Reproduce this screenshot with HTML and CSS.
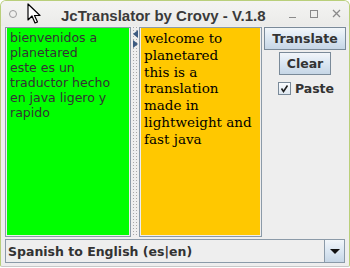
FILE: index.html
```html
<!DOCTYPE html>
<html>
<head>
<meta charset="utf-8">
<link rel="stylesheet" href="styles.css">
</head>
<body>
<div class="window">
  <div class="titlebar">
    <span class="dot"></span>
    <span class="title">JcTranslator by Crovy - V.1.8</span>
    <div class="controls">
      <span class="min"></span>
      <span class="max"></span>
      <svg class="close" width="9" height="9" viewBox="0 0 9 9"><path d="M1 1L8 8M8 1L1 8" stroke="#8a8a8a" stroke-width="1.3"/></svg>
    </div>
    <svg class="cursor" width="14" height="21" viewBox="0 0 14 21"><path d="M1 1L1 17L5 13L8 20L10.5 19L7.5 12.5L13 12.5Z" fill="#fff" stroke="#000" stroke-width="1.2" stroke-linejoin="round"/></svg>
  </div>
  <div class="content">
    <div class="main">
      <div class="split">
        <div class="pane left">
          <div class="text sans">bienvenidos a<br>planetared<br>este es un<br>traductor hecho<br>en java ligero y<br>rapido</div>
        </div>
        <div class="divider">
          <span class="arr l"></span>
          <span class="arr r"></span>
        </div>
        <div class="pane right">
          <div class="text serif">welcome to<br>planetared<br>this is a<br>translation<br>made in<br>lightweight and<br>fast java</div>
        </div>
      </div>
      <div class="side">
        <button class="btn translate">Translate</button>
        <button class="btn clear">Clear</button>
        <label class="check"><span class="box"><svg width="9" height="9" viewBox="0 0 9 9"><path d="M1.5 4.5L3.5 7.5L7.5 1.5" fill="none" stroke="#222" stroke-width="1.6"/></svg></span>Paste</label>
      </div>
    </div>
    <div class="combo">
      <span class="combo-text">Spanish to English (es|en)</span>
      <span class="combo-btn"><span class="tri"></span></span>
    </div>
  </div>
</div>
</body>
</html>
```

FILE: styles.css
```css
html, body {
  margin: 0;
  padding: 0;
  width: 350px;
  height: 268px;
  overflow: hidden;
  background: #ffffff;
}
.window {
  box-sizing: border-box;
  width: 350px;
  height: 267px;
  background: #eeeeee;
  border: 1px solid #b9cf7a;
  border-bottom-color: #c8c8c8;
  border-radius: 6px 6px 2px 2px;
  display: flex;
  flex-direction: column;
  overflow: hidden;
}
.titlebar {
  position: relative;
  height: 25px;
  flex: none;
  background: linear-gradient(#f4f4f2, #ebebe9);
  display: flex;
  align-items: center;
}
.dot {
  width: 6px;
  height: 6px;
  border: 1.5px solid #9a9a9a;
  border-radius: 50%;
  margin-left: 8px;
}
.title {
  font-family: "Liberation Sans", Arial, sans-serif;
  font-weight: bold;
  font-size: 15px;
  color: #3a3a3a;
  margin-left: 44px;
  padding-top: 3px;
}
.controls {
  margin-left: auto;
  display: flex;
  align-items: center;
  gap: 14px;
  margin-right: 8px;
}
.min {
  width: 7px;
  height: 1px;
  background: #8a8a8a;
  margin-top: 7px;
}
.max {
  width: 6px;
  height: 6px;
  border: 1px solid #8a8a8a;
}
.cursor {
  position: absolute;
  left: 26px;
  top: 2px;
}
.content {
  flex: 1;
  display: flex;
  flex-direction: column;
  padding: 1px 4px 4px 4px;
}
.main {
  flex: 1;
  display: flex;
  gap: 2px;
  min-height: 0;
}
.split {
  width: 257px;
  display: flex;
  height: 210px;
}
.pane {
  box-sizing: border-box;
  border: 1px solid #8b9aa8;
  padding: 0 1px 1px 1px;
  background: #eeeeee;
  display: flex;
}
.pane.left { width: 126px; }
.pane.right { width: 123px; }
.text {
  flex: 1;
  padding: 2px 3px;
  white-space: nowrap;
}
.sans {
  background: #00ff00;
  font-family: "DejaVu Sans", sans-serif;
  font-size: 12.5px;
  line-height: 15px;
  color: #333333;
}
.serif {
  background: #ffc800;
  font-family: "DejaVu Serif", serif;
  font-size: 13.5px;
  line-height: 16.8px;
  color: #000000;
  padding-top: 2px;
}
.divider {
  width: 8px;
  background-color: #eeeeee;
  background-image: radial-gradient(circle, #a8a8a8 0.6px, transparent 0.9px);
  background-size: 3px 3px;
  background-position: 1px 14px;
  display: flex;
  flex-direction: column;
  align-items: center;
  padding-top: 3px;
  gap: 2px;
  position: relative;
}
.arr {
  width: 0;
  height: 0;
  border-top: 4px solid transparent;
  border-bottom: 4px solid transparent;
}
.arr.l { border-right: 5px solid #3c5a80; }
.arr.r { border-left: 5px solid #3c5a80; }
.side {
  flex: 1;
  display: flex;
  flex-direction: column;
  align-items: center;
  gap: 2px;
}
.btn {
  box-sizing: border-box;
  font-family: "DejaVu Sans", sans-serif;
  font-weight: bold;
  font-size: 12.5px;
  color: #333333;
  background: linear-gradient(#f2f6fa, #dde8f3 45%, #c6d6e6);
  border: 1px solid #7a8a99;
  border-radius: 0;
  padding: 0;
  margin: 0;
  height: 23px;
}
.translate { width: 82px; }
.clear { width: 52px; margin-top: 0; }
.check {
  display: flex;
  align-items: center;
  gap: 4px;
  font-family: "DejaVu Sans", sans-serif;
  font-weight: bold;
  font-size: 12.5px;
  color: #333333;
  margin-top: 4px;
  margin-left: 2px;
}
.box {
  box-sizing: border-box;
  width: 13px;
  height: 13px;
  border: 1px solid #7a8a99;
  background: linear-gradient(#fafcfe, #dfe8f1);
  display: flex;
  align-items: center;
  justify-content: center;
}
.combo {
  margin-top: 2px;
  box-sizing: border-box;
  height: 24px;
  border: 1px solid #8b9aa8;
  background: #eeeeee;
  display: flex;
  align-items: center;
}
.combo-text {
  flex: 1;
  font-family: "DejaVu Sans", sans-serif;
  font-weight: bold;
  font-size: 12.5px;
  color: #333333;
  padding-left: 2px;
}
.combo-btn {
  box-sizing: border-box;
  width: 20px;
  height: 100%;
  border-left: 1px solid #8b9aa8;
  background: linear-gradient(#f2f6fa, #dde8f3 45%, #c6d6e6);
  display: flex;
  align-items: center;
  justify-content: center;
}
.tri {
  width: 0;
  height: 0;
  border-left: 5px solid transparent;
  border-right: 5px solid transparent;
  border-top: 5px solid #111;
}
```
